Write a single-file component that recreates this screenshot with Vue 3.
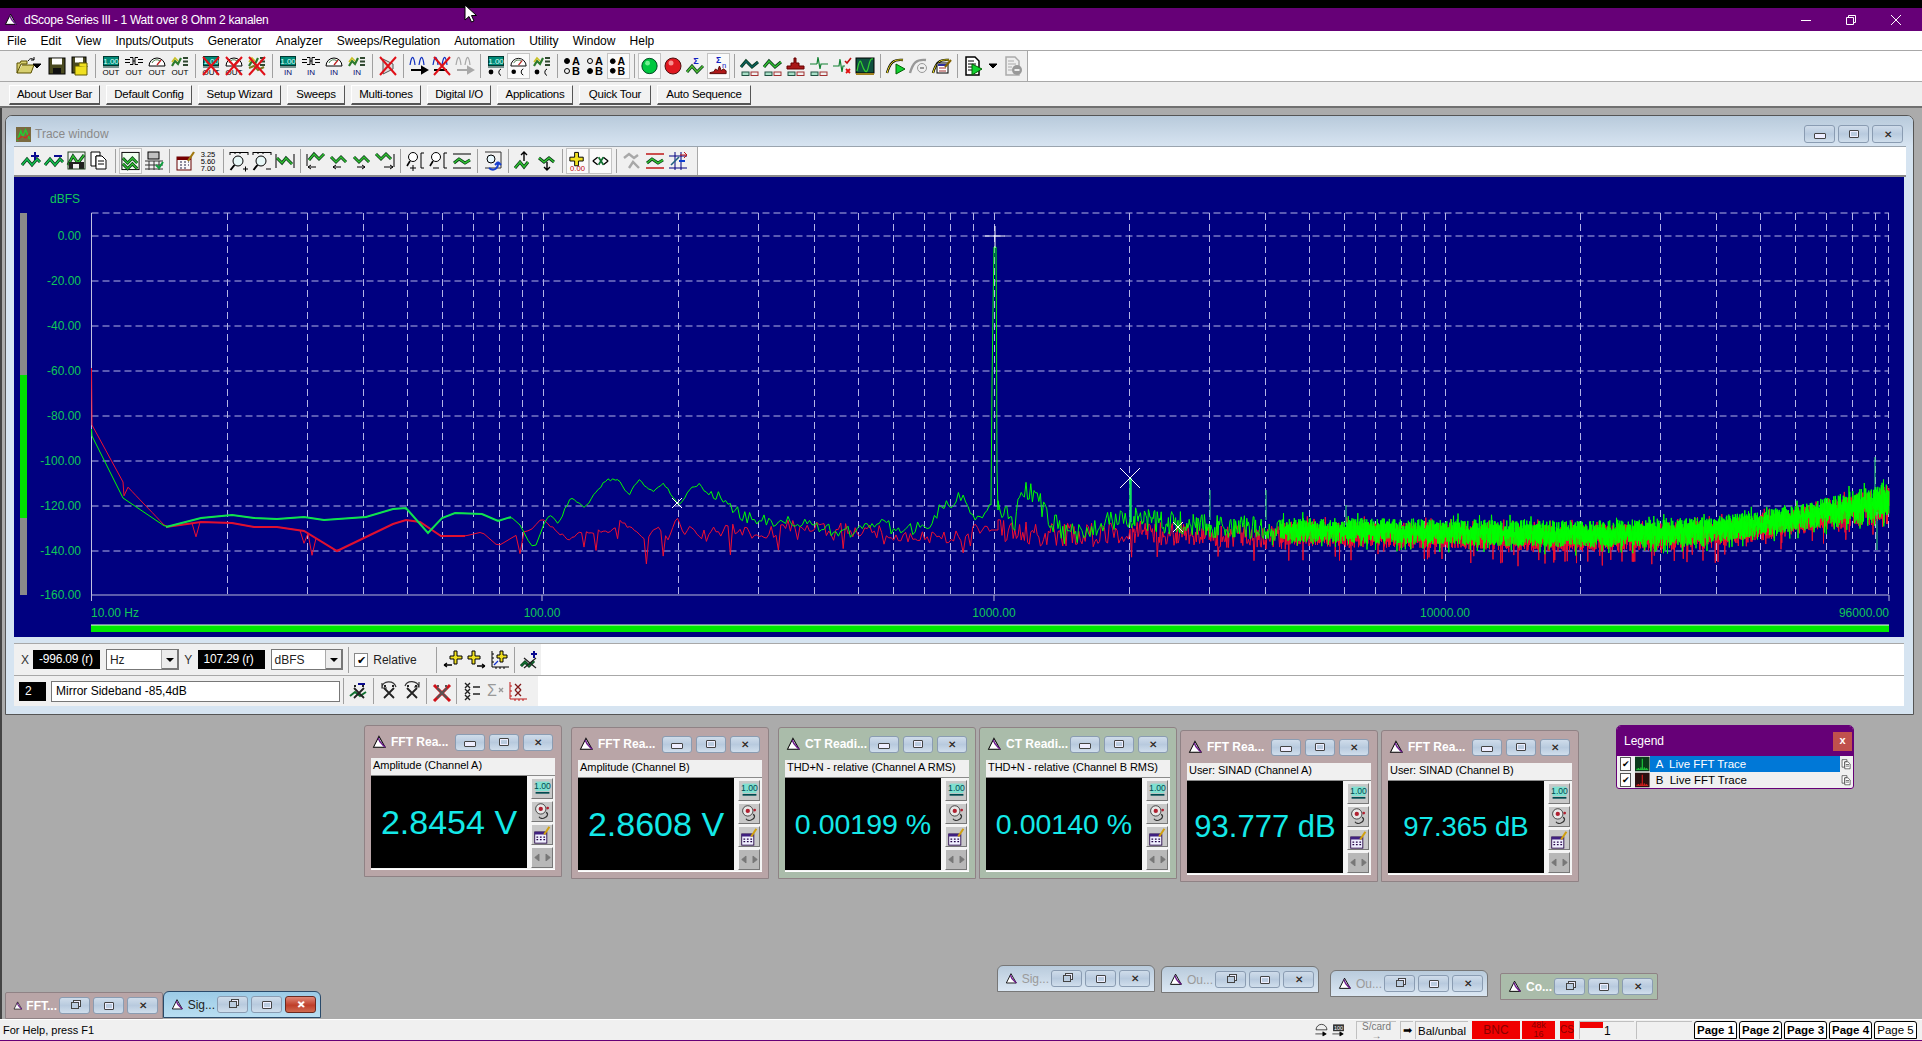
<template>
  <div class="app">
    <div class="topstrip"></div>
    <div class="titlebar">
      <Ico name="win" :size="16" class="title-ico" />
      <span class="title-text">dScope Series III - 1 Watt over 8 Ohm 2 kanalen</span>
      <div class="sys-btns">
        <svg width="12" height="12" viewBox="0 0 12 12"><path d="M1 6.5h10" stroke="#fff" fill="none" /></svg>
        <svg width="12" height="12" viewBox="0 0 12 12"><path d="M1.5 3.5h7v7h-7zM3.5 3.5v-2h7v7h-2" stroke="#fff" fill="none" /></svg>
        <svg width="12" height="12" viewBox="0 0 12 12"><path d="M1 1l10 10M11 1l-10 10" stroke="#fff" fill="none" /></svg>
      </div>
    </div>
    <div class="menubar">
      <span v-for="m in menus" :key="m">{{ m }}</span>
    </div>
    <div class="toolrow">
      <div class="tools main-tools">
        <template v-for="(t, i) in mainTools" :key="i">
          <i v-if="t === '|'" class="sep"></i>
          <span v-else :class="['tb', { on: t.endsWith('*'), narrow: t === 'drop', mid: t === 'dropWide' }]">
            <Ico :name="t.replace('*', '')" />
          </span>
        </template>
      </div>
    </div>
    <div class="userbar">
      <button v-for="b in userBtns" :key="b[0]" class="ubtn" :style="{ width: b[1] + 'px' }">{{ b[0] }}</button>
    </div>

    <div class="desktop">
      <div class="trace">
        <div class="trace-title">
          <Ico name="traceIco" :size="15" />
          <span>Trace window</span>
          <div class="caps">
            <span class="cap"><i class="g-min"></i></span>
            <span class="cap"><i class="g-max"></i></span>
            <span class="cap"><b>✕</b></span>
          </div>
        </div>
        <div class="toolrow2">
          <div class="tools trace-tools">
            <template v-for="(t, i) in traceTools" :key="i">
              <i v-if="t === '|'" class="sep"></i>
              <span v-else :class="['tb', { on: t.endsWith('*') }]">
                <Ico :name="t.replace('*', '')" />
              </span>
            </template>
          </div>
        </div>

        <svg class="plot" width="1890" height="460" viewBox="14 177 1890 460">
          <rect x="14" y="177" width="1890" height="460" fill="#000080" />
          <rect x="20" y="213" width="7" height="382" fill="#8a8a8a" />
          <rect x="20" y="375" width="7" height="143" fill="#00e000" />
          <text x="80" y="203" class="lbl" text-anchor="end">dBFS</text>
          <g v-for="g in yGrid" :key="g.y">
            <line x1="91.5" x2="1889" :y1="g.y" :y2="g.y" class="grid" />
            <text v-if="g.t" x="81" :y="g.y + 4" class="lbl" text-anchor="end">{{ g.t }}</text>
          </g>
          <text x="81" y="599" class="lbl" text-anchor="end">-160.00</text>
          <line v-for="x in xGrid" :key="x" :x1="x" :x2="x" y1="213" y2="595" class="grid" />
          <line x1="91.5" x2="91.5" y1="213" y2="595" stroke="#c0c0e0" />
          <path d="M91.5 595H1889M91.5 595v6M542 595v6M994 595v6M1445.5 595v6M1889 595v6" stroke="#b8b8d8" fill="none" />
          <polyline :points="traces.red" fill="none" stroke="#f01030" stroke-width="1" />
          <polyline :points="traces.redThick" fill="none" stroke="#e01030" stroke-width="2" />
          <polyline :points="traces.green" fill="none" stroke="#00ff00" stroke-width="1" />
          <polyline :points="traces.greenThick" fill="none" stroke="#10e050" stroke-width="2" />
          <path d="M1130.5 478V522" stroke="#10e060" stroke-width="2.5" fill="none" />
          <path d="M1210 490V520M1266 490V520M1346 505V525M1875 457V490M1877 512V550" stroke="#30e070" fill="none" />
          <path d="M985 236h20M995 226v22M1120 468l20 20M1140 468l-20 20M672 498l10 10M682 498l-10 10M1173 522l10 10M1183 522l-10 10" stroke="#fff" fill="none" />
          <text x="91" y="617" class="lbl">10.00 Hz</text>
          <text x="542" y="617" class="lbl" text-anchor="middle">100.00</text>
          <text x="994" y="617" class="lbl" text-anchor="middle">1000.00</text>
          <text x="1445" y="617" class="lbl" text-anchor="middle">10000.00</text>
          <text x="1889" y="617" class="lbl" text-anchor="end">96000.00</text>
          <rect x="91" y="625" width="1798" height="7" fill="#00e800" />
          <path d="M91 625h1798" stroke="#e8ffe8" fill="none" />
        </svg>

        <div class="ctl first">
          <div class="ctl-in row1">
            <span class="axis">X</span>
            <span class="readout">-996.09 (r)</span>
            <span class="combo"><span>Hz</span><i class="arrow"></i></span>
            <span class="axis y">Y</span>
            <span class="readout">107.29 (r)</span>
            <span class="combo"><span>dBFS</span><i class="arrow"></i></span>
            <i class="sep small"></i>
            <span class="check">✔</span>
            <span class="rel">Relative</span>
            <i class="sep small"></i>
            <span v-for="n in ['curL', 'curR', 'curAxis']" :key="n" class="tb"><Ico :name="n" /></span>
            <i class="sep tight"></i>
            <span class="tb"><Ico name="mkAdd" /></span>
          </div>
        </div>
        <div class="ctl">
          <div class="ctl-in row2">
            <span class="readout idx">2</span>
            <span class="note">Mirror Sideband -85,4dB</span>
            <i class="sep tight"></i>
            <span class="tb"><Ico name="mkDel" /></span>
            <i class="sep tight"></i>
            <span class="tb"><Ico name="mkUp" /></span>
            <span class="tb"><Ico name="mkDn" /></span>
            <i class="sep tight"></i>
            <span class="tb"><Ico name="mkX" /></span>
            <i class="sep tight"></i>
            <span class="tb"><Ico name="mkList" /></span>
            <span class="tb"><Ico name="mkSum" /></span>
            <span class="tb"><Ico name="mkRed" /></span>
          </div>
        </div>
      </div>

      <div
        v-for="w in readings"
        :key="w.value"
        :class="['reading', w.tone]"
        :style="{ left: w.x + 'px', top: w.y - 108 + 'px' }"
      >
        <div class="r-title">
          <Ico name="win" :size="17" />
          <span class="r-name">{{ w.title }}</span>
          <div class="caps">
            <span class="cap"><i class="g-min"></i></span>
            <span class="cap"><i class="g-max"></i></span>
            <span class="cap"><b>✕</b></span>
          </div>
        </div>
        <div class="r-label">{{ w.label }}</div>
        <div class="r-body">
          <div class="r-value" :style="{ fontSize: w.size + 'px' }">{{ w.value }}</div>
          <div class="r-side">
            <span v-for="n in ['rNum', 'rDial', 'rCal', 'rArrows']" :key="n" :class="['r-btn', { dim: n === 'rArrows' }]">
              <Ico :name="n" :size="19" />
            </span>
          </div>
        </div>
      </div>

      <div class="legend">
        <div class="lg-title">
          <span>Legend</span>
          <b>x</b>
        </div>
        <div v-for="l in legend" :key="l.t" class="lg-row">
          <span class="lg-check">✔</span>
          <Ico :name="l.ico" :size="16" />
          <span :class="['lg-name', { sel: l.sel }]">{{ l.t }}</span>
          <Ico name="copy" :size="13" class="lg-copy" />
        </div>
      </div>

      <div
        v-for="m in minis"
        :key="m.x"
        :class="['mini', m.tone, { active: m.active }]"
        :style="{ left: m.x + 'px', top: m.y - 108 + 'px' }"
      >
        <Ico name="win" :size="16" />
        <span class="m-name">{{ m.title }}</span>
        <div class="caps">
          <span class="cap"><i class="g-rest"></i></span>
          <span class="cap"><i class="g-max"></i></span>
          <span class="cap close"><b>✕</b></span>
        </div>
      </div>

      <svg class="cursor" width="14" height="20" viewBox="0 0 14 20">
        <path d="M1 1v15l4-3.500 2.500 5.500 2.500-1-2.500-5.500h5z" fill="#fff" stroke="#000" />
      </svg>
    </div>

    <div class="status">
      <span class="help">For Help, press F1</span>
      <div class="panels">
        <Ico name="stGauge" :size="15" />
        <Ico name="stNum" :size="15" />
        <span class="pn scard">S/card<br />→</span>
        <span class="pn arrow-pn">➡</span>
        <span class="pn bal">Bal/unbal</span>
        <span class="pn redp bnc">BNC</span>
        <span class="pn redp k48">48k<br />16</span>
        <span class="pn redp cs">CS</span>
        <span class="pn one"><i></i>1</span>
        <span class="pn blank"></span>
        <span v-for="p in pages" :key="p" :class="['page', { thin: p === 'Page 5' }]">{{ p }}</span>
      </div>
    </div>
  </div>
</template>

<script setup>
import { h } from 'vue';

// small shape helpers for the toolbar icons
const P = (d, s = '#000', f = 'none', w = 1) => ['path', { d, stroke: s, fill: f, 'stroke-width': w }];
const R = (x, y, wd, ht, f, s = 'none') => ['rect', { x, y, width: wd, height: ht, fill: f, stroke: s }];
const C = (cx, cy, r, f, s = 'none') => ['circle', { cx, cy, r, fill: f, stroke: s }];
const T = (x, y, str, size, f = '#000', bold = false) => [
  'text',
  { x, y, 'font-size': size, fill: f, 'text-anchor': 'middle', 'font-family': 'Liberation Sans', 'font-weight': bold ? 700 : 400 },
  str,
];

const num = [R(3.5, 1.5, 15, 9, '#008a78', '#003830'), T(11, 9, '1.00', 8, '#d8fff4'), P('M3 12h16', '#003830')];
const sw = [P('M2 4.500h5M2 7.500h5M15 4.500h5M15 7.500h5M7 2.500h3v7h-3M15 2.500h-3v7h3'), P('M10 6h2')];
const gauge = [P('M3 11a8 8 0 0 1 16 0z', '#000', '#fff'), P('M11 10l4-5', '#c02020', 'none', 1.3), P('M6 8a5 5 0 0 1 8-2', '#508050')];
const bars = [P('M3 11l3-5 3 3 3-6', '#2c7a2c', 'none', 2.2), P('M3 7l3-4 3 3', '#c8c020', 'none', 1.6), R(14, 2, 5, 2, '#304830'), R(14, 5.5, 5, 2, '#304830'), R(14, 9, 5, 2, '#304830')];
const redX = P('M3 2L19 20M19 2L3 20', '#e01018', 'none', 2);
const oc = [C(6, 17, 2.4, '#000'), P('M16 14a3.500 3.500 0 0 0 0 6.500')];
const zig = 'M2 15L7 9l5 6 5-6 3 3';
const wave = (d = zig, c = '#12c050') => [P(d, '#083818', 'none', 3), P(d, c, 'none', 1.5)];
const mini = (c) => [R(3, 17, 7, 3.5, '#a8e0c8', '#205040'), R(12, 17, 7, 3.5, '#f0f0f0', c)];
const ab = (a, b) => [C(5, 6, 2.5, a ? '#000' : 'none', '#000'), C(5, 16, 2.5, b ? '#000' : 'none', '#000'), T(14, 10, 'A', 11, '#000', true), T(14, 20, 'B', 11, '#000', true)];
const cross = (c = '#222') => P('M6 8l10 10M16 8l-10 10M6 6h2M14 6h2', c, 'none', 1.8);

const icons = {
  win: [P('M2 17L9 3l8 14z', '#000', '#fff', 1.3), P('M8 5c2 7 5 8 9 12', '#6a1a8a', 'none', 2)],
  open: [P('M2 18V8h3l1-2h6v3H6l-4 9h14l3-8H7', '#5a5000', '#d8d070'), P('M13 6c2-3 4-3 6-1M19 2v3h-3', '#000')],
  drop: [P('M0 9h8l-4 4z', '#000', '#000')],
  dropWide: [P('M7 9h8l-4 4z', '#000', '#000')],
  save: [R(3, 3, 16, 16, '#4a4a20', '#000'), R(6, 3.500, 10, 6, '#fff'), R(7, 13, 8, 6, '#111')],
  saveas: [R(3, 2, 14, 16, '#4a4a20', '#000'), R(6, 2.500, 8, 5, '#fff'), P('M6 20v-9h12v9z', '#605800', '#f0e020'), P('M10 11V8h8v4', '#605800', '#f0e020')],
  numOut: [...num, T(11, 20, 'OUT', 8)],
  swOut: [...sw, T(11, 20, 'OUT', 8)],
  gaugeOut: [...gauge, T(11, 20, 'OUT', 8)],
  barsOut: [...bars, T(11, 20, 'OUT', 8)],
  numOutX: [...num, T(11, 20, 'OUT', 8), redX],
  gaugeOutX: [...gauge, T(11, 20, 'OUT', 8), redX],
  barsX: [...bars, P('M3 13l5-2 4 4 6-3', '#7a7a20', 'none', 2), redX],
  numIn: [...num, T(11, 20, 'IN', 8, '#0a0a70')],
  swIn: [...sw, T(11, 20, 'IN', 8, '#0a0a70')],
  gaugeIn: [...gauge, T(11, 20, 'IN', 8, '#0a0a70')],
  barsIn: [...bars, T(11, 20, 'IN', 8, '#0a0a70')],
  redX: [P('M6 4l10 5v5l-10 5z', '#555', '#ddd'), redX],
  wavesArrow: [P('M2 10c2-12 4-8 5 0M11 10c2-12 4-8 5 0', '#1030c0', 'none', 1.2), P('M3 15h13M14 12l5 3-5 3z', '#000', '#000', 2)],
  wavesX: [P('M2 10c2-12 4-8 5 0M11 10c2-12 4-8 5 0', '#1030c0', 'none', 1.2), P('M3 15h13', '#000', 'none', 2), redX],
  wavesGray: [P('M2 10c2-12 4-8 5 0M11 10c2-12 4-8 5 0', '#a8a8a8', 'none', 1.2), P('M3 15h13M14 12l5 3-5 3z', '#a8a8a8', '#a8a8a8', 2)],
  numC: [...num, ...oc],
  gaugeC: [...gauge, ...oc],
  barsC: [...bars, ...oc],
  abA: ab(true, false),
  abB: ab(false, true),
  abAB: ab(true, true),
  green: [C(11, 11, 8, '#00c840', '#004020'), C(9, 8, 2.5, '#70f090')],
  red: [C(11, 11, 8, '#e01820', '#501010'), C(9, 8, 2.5, '#f89090')],
  sigmaWave: [T(11, 9, 'Σ', 9, '#1020c0', true), P('M2 17l5-6 5 6 6-6', '#0a4020', 'none', 3), P('M2 17l5-6 5 6 6-6', '#50c030', 'none', 1.4)],
  sigma: [T(11, 8, 'Σ', 9, '#1020c0', true), T(17, 13, 'n', 8, '#1020c0'), P('M2 19h17V16l-3-2-2 2-2-5-2 5-2-2-2 3-4 1z', '#5a0a0a', '#b01818')],
  waveDk: [...wave('M2 12l5-6 6 6 6-5', '#0a6060'), ...mini('#a03030')],
  waveGn: [...wave('M2 12l5-6 6 6 6-5', '#30c030'), ...mini('#a03030')],
  specRed: [P('M2 14v-3h4V8h3V3h2v5h3v3h5v3z', '#600', '#a81818'), ...mini('#a03030')],
  specGn: [P('M2 9h7M9 9l1-7 2 12 1-5h7', '#108030', 'none', 1.2), ...mini('#a03030')],
  specX: [P('M2 11h6l1-7 2 13 1-6h2', '#108030', 'none', 1.2), P('M14 6l2 2 4-5', '#c01010', 'none', 1.6), P('M15 14l4 4M19 14l-4 4', '#e01010', 'none', 1.8)],
  scope: [R(2, 3, 18, 15, '#105040', '#000'), P('M3 16c4-20 4-4 8 0s3-14 8-12', '#30d030', 'none', 1.2), R(2, 18, 18, 2, '#a08020')],
  curvePlay: [P('M2 18c3-10 6-14 16-13', '#000', 'none', 2.4), P('M2 18c3-10 6-14 16-13', '#f0e020', 'none', 1), P('M11 9l9 5-9 5z', '#006000', '#10d030')],
  curveGray: [P('M2 18c3-10 6-14 16-13', '#999', 'none', 2.4), C(14, 13, 4.5, 'none', '#999'), P('M12 13h4', '#999', 'none', 2)],
  script: [P('M2 18c3-10 6-14 16-13', '#000', 'none', 2.4), P('M2 18c3-10 6-14 16-13', '#f0e020', 'none', 1), R(6, 8, 11, 10, '#fff', '#000'), R(7, 9, 9, 2, '#3030a0'), P('M8 13h7M8 16h7', '#a03030'), P('M14 12l6-7', '#806000', 'none', 2)],
  docPlay: [P('M4 2h9l4 4v14H4z', '#000', '#fff', 1.5), P('M6 6h6M6 9h8M6 12h4M6 15h4', '#000'), P('M10 9l10 5-10 6z', '#006000', '#10d030')],
  docGray: [P('M4 2h9l4 4v14H4z', '#aaa', '#eee', 1.5), P('M6 6h6M6 9h8M6 12h4M6 15h4', '#aaa'), C(15, 15, 5, '#999'), P('M12.500 15h5', '#eee', 'none', 2)],

  wvAdd: [...wave(), P('M15 2v8M11 6h8', '#0a0a90', 'none', 2)],
  wvDel: [...wave(), P('M11 6h8', '#0a0a90', 'none', 2)],
  wvSave: [...wave('M2 15L7 6l5 7 6-8', '#30c030'), R(3, 12, 15, 7, '#202020'), R(7, 14, 6, 5, '#f0f0f0'), R(2, 2, 17, 17, 'none', '#204020')],
  copy: [P('M2 2h9v4h-4v10h-5z', '#000', '#fff'), P('M7 6h6l4 4v9h-10z', '#000', '#fff'), P('M9 11h6M9 14h6', '#000')],
  wvBox: [R(2, 2, 18, 18, '#f0fff0', '#000'), ...wave('M3 8l5 5 5-5 5 5', '#30c030'), ...wave('M3 14l5 5 5-5 5 5', '#30c030')],
  wvTable: [R(5, 2, 11, 7, '#c0c0c0', '#000'), P('M2 11h18M2 15h18M2 19h18M6 11v9M11 11v9M16 11v9', '#333'), P('M13 15l3 3 4-6', '#10a040', 'none', 2)],
  calPen: [R(3, 7, 14, 13, '#f8f8f8', '#600'), R(3, 7, 14, 3, '#700'), P('M6 12h2M10 12h2M14 12h1M6 15h2M10 15h2M14 15h1M6 18h2M10 18h2', '#224'), P('M14 11l6-9', '#a07810', 'none', 2.2)],
  numsList: [T(11, 7, '3.25', 7.5), T(11, 14, '5.60', 7.5), T(11, 21, '7.00', 7.5)],
  zoomIn: [P('M2 2.500h18M2 2v3M7 2v2M12 2v2M20 2v3', '#000'), C(10, 11, 5, '#e8f8f8', '#000'), P('M6.500 15l-4 5', '#000', 'none', 2), P('M15 19h5M17.500 16.500v5', '#000')],
  zoomOut: [P('M2 2.500h18M2 2v3M7 2v2M12 2v2M20 2v3', '#000'), C(10, 11, 5, '#e8f8f8', '#000'), P('M6.500 15l-4 5', '#000', 'none', 2), P('M15 19h5', '#000')],
  zoomFit: [P('M2 4v14M20 4v14', '#000'), ...wave('M3 8l5 5 4-5 6 6', '#30c030')],
  pkL: [...wave('M4 10l5-6 5 5 5-5', '#30c030'), P('M2 4v12M3 17h8M3 17l3-2M3 17l3 2', '#000')],
  pkLb: [...wave('M3 7l5 5 5-5 5 5', '#30c030'), P('M5 17h8M5 17l3-2M5 17l3 2', '#000')],
  pkR: [...wave('M3 7l5 5 5-5 5 5', '#30c030'), P('M6 17h8M14 17l-3-2M14 17l-3 2', '#000')],
  pkRb: [...wave('M2 4l5 5 5-5 5 5', '#30c030'), P('M20 4v13M10 17h9M19 17l-3-2M19 17l-3 2', '#000')],
  magL: [C(8, 7, 4.5, '#fff', '#000'), P('M5 11l-3 5', '#000', 'none', 1.6), P('M5 18h6M8 15v6M16 3h3M16 3v15h3', '#000')],
  magLm: [C(8, 7, 4.5, '#fff', '#000'), P('M5 11l-3 5', '#000', 'none', 1.6), P('M5 18h6M16 3h3M16 3v15h3', '#000')],
  wvLines: [P('M2 4h18M2 18h18', '#000', 'none', 1.2), ...wave('M3 13l5-4 6 4 5-3', '#30c030')],
  grUndo: [P('M3 2h16v16H3', '#333', 'none', 1), C(9, 9, 4, '#e8f8ff', '#000'), P('M7 18c5 4 10 0 9-6M16 12l-3 3M16 12l3 3', '#1840d0', 'none', 2)],
  upWave: [...wave('M2 18l5-6 4 5 4-5', '#30c030'), P('M11 11V2M8 5l3-3 3 3', '#000', 'none', 1.4)],
  dnWave: [...wave('M3 8l5 4 5-4 5 4', '#30c030'), P('M11 12v8M8 17l3 3 3-3', '#000', 'none', 1.4)],
  cursorPlus: [P('M8 2h4v5h5v4h-5v5H8v-5H3V7h5z', '#000', '#f0e020'), T(11, 21, '0.00', 8, '#c00000')],
  cursorX: [P('M3 11l5-4M3 11l5 4M19 11l-5-4M19 11l-5 4', '#000', 'none', 1.4), P('M9 7l5 8M14 7l-5 8', '#107030', 'none', 1.8)],
  grayPeak: [P('M3 8l5-4 5 4 4-3M8 18l4-6 6 6', '#a8a8a8', 'none', 2.4)],
  redLines: [P('M2 4h18M2 18h18', '#c01818', 'none', 1.4), ...wave('M3 13l5-4 6 4 5-3', '#30c030')],
  axisGrid: [P('M8 2v18M2 6h18M2 18h18M14 2v18', '#000080'), P('M4 15l8-8', '#206080', 'none', 1.6), P('M13 5h6M17 2l3 3-3 3', '#c01818'), P('M12 11h6', '#1040d0', 'none', 2)],

  curL: [P('M11 2h3v5h5v3h-5v5h-3v-5H7V7h4z', '#000', '#f0e020'), P('M1 16h8M1 16l3-2M1 16l3 2', '#000', 'none', 1.3)],
  curR: [P('M6 2h3v5h5v3H9v5H6v-5H2V7h4z', '#000', '#f0e020'), P('M11 17h8M19 17l-3-2M19 17l-3 2', '#000', 'none', 1.3)],
  curAxis: [P('M3 2v16h17M3 5h2M3 9h2M3 13h2M7 18v2M11 18v2M15 18v2', '#000'), P('M11 2h3v4h4v3h-4v4h-3V9H8V6h3z', '#000', '#f0e020'), P('M5 16l4-4', '#1030d0', 'none', 1.3)],
  mkAdd: [...wave('M2 17l4-4 4 4 5-5', '#107030'), P('M5 9l12 10M17 9L5 19', '#222', 'none', 1.3), P('M15 2v7M12 5h6', '#0a0a90', 'none', 2)],
  mkDel: [P('M2 16l5-4 5 4 6-4', '#107030', 'none', 2), cross(), P('M10 4h7', '#0a0a90', 'none', 2)],
  mkUp: [P('M4 8c0-8 12-8 14-1M4 3v5h5', '#333', 'none', 1.2), cross()],
  mkDn: [P('M4 6c2-6 12-6 14 1M18 2v5h-5', '#333', 'none', 1.2), cross()],
  mkX: [P('M3 5l16 16M19 5L3 21', '#d01018', 'none', 3), cross('#555')],
  mkList: [P('M4 3l5 5M9 3L4 8M4 9l5 5M9 9l-5 5M4 15l5 5M9 15l-5 5', '#222', 'none', 1.4), P('M12 7h7M12 14h7', '#222', 'none', 1.5)],
  mkSum: [T(8, 16, 'Σ', 16, '#999'), P('M15 8l4 4M19 8l-4 4', '#999', 'none', 1.4)],
  mkRed: [P('M3 2v17h17M3 6h2M3 11h2M3 16h2M8 19v2M12 19v2M16 19v2', '#c01818'), P('M8 4l6 6M14 4l-6 6M8 10l6 6M14 10l-6 6', '#801818', 'none', 1.3)],

  traceIco: [R(0, 0, 22, 22, '#7a6a40'), P('M2 20l5-14 3 8 4-10 6 14', '#20d030', 'none', 2), P('M2 18l7-4 5 2 6-6', '#e02020', 'none', 1.5)],
  rNum: [R(3, 3, 16, 11, '#80e0d0'), T(11, 12, '1.00', 10, '#004a50'), P('M3 16h16', '#004a50', 'none', 2)],
  rDial: [C(9, 8, 6, '#e8e8e8', '#333'), C(9, 8, 2.5, '#b02030'), P('M15 12c3 1 2 5-1 6-3 2-6 1-7-1', '#333', 'none', 1.4), C(17, 7, 1.6, '#b02030')],
  rCal: [R(2, 8, 14, 13, '#f0f0ff', '#204'), R(2, 8, 14, 3, '#402080'), P('M4 14h2M8 14h2M12 14h2M4 17h2M8 17h2M12 17h2', '#204', 'none', 1.4), P('M13 11l6-9', '#d0a010', 'none', 2.4)],
  rArrows: [P('M2 11l5-4v8zM20 11l-5-4v8z', '#777', '#777')],
  traceA: [R(0, 0, 22, 22, '#0a3a1a'), P('M2 19h18M5 19v-2M9 19v-3M11 19V3M14 19v-3M17 19v-2', '#20e040', 'none', 1.5)],
  traceB: [R(0, 0, 22, 22, '#2a1010'), P('M2 19h18M5 19v-2M9 19v-3M11 19V3M14 19v-3M17 19v-2', '#f02020', 'none', 1.5)],
  stGauge: [P('M3 10a8 8 0 0 1 16 0z', '#000', '#eee'), P('M2 16h15M13 13l5 3-5 3z', '#000', '#000')],
  stNum: [R(3, 2, 16, 10, '#333'), T(11, 10, '100', 8, '#fff'), P('M2 16h15M13 13l5 3-5 3z', '#000', '#000')],
};

const Ico = (props) =>
  h(
    'svg',
    { width: props.size || 22, height: props.size || 22, viewBox: '0 0 22 22' },
    (icons[props.name] || []).map(([tag, attrs, txt]) => h(tag, attrs, txt))
  );
Ico.props = ['name', 'size'];

const menus = ['File', 'Edit', 'View', 'Inputs/Outputs', 'Generator', 'Analyzer', 'Sweeps/Regulation', 'Automation', 'Utility', 'Window', 'Help'];

const mainTools = [
  'open', 'drop', 'save', 'saveas', '|',
  'numOut', 'swOut', 'gaugeOut', 'barsOut', '|',
  'numOutX', 'gaugeOutX', 'barsX', '|',
  'numIn', 'swIn', 'gaugeIn', 'barsIn', '|',
  'redX', '|',
  'wavesArrow', 'wavesX', 'wavesGray', '|',
  'numC', 'gaugeC*', 'barsC', '|',
  'abA', 'abB', 'abAB*', '|',
  'green*', 'red', 'sigmaWave', 'sigma*', '|',
  'waveDk', 'waveGn', 'specRed', 'specGn', 'specX', 'scope', '|',
  'curvePlay', 'curveGray', 'script', '|',
  'docPlay', 'dropWide', 'docGray',
];

const traceTools = [
  'wvAdd', 'wvDel', 'wvSave', 'copy', '|',
  'wvBox*', 'wvTable', '|',
  'calPen', 'numsList', '|',
  'zoomIn', 'zoomOut', 'zoomFit', '|',
  'pkL', 'pkLb', 'pkR', 'pkRb', '|',
  'magL', 'magLm', 'wvLines', '|',
  'grUndo', '|',
  'upWave', 'dnWave', '|',
  'cursorPlus*', 'cursorX*', '|',
  'grayPeak', 'redLines', 'axisGrid',
];

const userBtns = [
  ['About User Bar', 91], ['Default Config', 86], ['Setup Wizard', 83], ['Sweeps', 58], ['Multi-tones', 70],
  ['Digital I/O', 64], ['Applications', 76], ['Quick Tour', 72], ['Auto Sequence', 94],
];

const readings = [
  { x: 364, y: 725, tone: 'rose', title: 'FFT Rea...', label: 'Amplitude (Channel A)', value: '2.8454 V', size: 34 },
  { x: 571, y: 727, tone: 'rose', title: 'FFT Rea...', label: 'Amplitude (Channel B)', value: '2.8608 V', size: 34 },
  { x: 778, y: 727, tone: 'sage', title: 'CT Readi...', label: 'THD+N - relative (Channel A RMS)', value: '0.00199 %', size: 28.5 },
  { x: 979, y: 727, tone: 'sage', title: 'CT Readi...', label: 'THD+N - relative (Channel B RMS)', value: '0.00140 %', size: 28.5 },
  { x: 1180, y: 730, tone: 'rose', title: 'FFT Rea...', label: 'User: SINAD (Channel A)', value: '93.777 dB', size: 31 },
  { x: 1381, y: 730, tone: 'rose', title: 'FFT Rea...', label: 'User: SINAD (Channel B)', value: '97.365 dB', size: 27.5 },
];

const legend = [
  { t: 'A  Live FFT Trace', ico: 'traceA', sel: true },
  { t: 'B  Live FFT Trace', ico: 'traceB', sel: false },
];

const minis = [
  { x: 5, y: 992, tone: 'rose', title: 'FFT...' },
  { x: 163, y: 991, tone: 'blue', title: 'Sig...', active: true },
  { x: 997, y: 965, tone: 'blue', title: 'Sig...' },
  { x: 1161, y: 966, tone: 'blue', title: 'Ou...' },
  { x: 1330, y: 970, tone: 'blue', title: 'Ou...' },
  { x: 1500, y: 973, tone: 'sage', title: 'Co...' },
];

const pages = ['Page 1', 'Page 2', 'Page 3', 'Page 4', 'Page 5'];

// plot axes: 45px per 20 dB, 451px per decade
const yGrid = [
  { y: 213 }, { y: 236, t: '0.00' }, { y: 281, t: '-20.00' }, { y: 326, t: '-40.00' }, { y: 371, t: '-60.00' },
  { y: 416, t: '-80.00' }, { y: 461, t: '-100.00' }, { y: 506, t: '-120.00' }, { y: 551, t: '-140.00' },
];
const xGrid = [];
for (let dec = 0; dec < 4; dec++) {
  for (let k = 1; k < 10; k++) {
    const x = 91.5 + 451 * (dec + Math.log10(k));
    if (x > 92 && x < 1889) xGrid.push(Math.round(x) + 0.5);
  }
}
xGrid.push(1888.5);

const seeded = (seed) => () => {
  seed = (seed + 0x6d2b79f5) | 0;
  let t = Math.imul(seed ^ (seed >>> 15), 1 | seed);
  t = (t + Math.imul(t ^ (t >>> 7), 61 | t)) ^ t;
  return ((t ^ (t >>> 14)) >>> 0) / 4294967296;
};

const lerp = (pts, x) => {
  for (let i = 1; i < pts.length; i++) {
    if (x <= pts[i][0]) {
      const [x0, y0] = pts[i - 1];
      const [x1, y1] = pts[i];
      return y0 + ((y1 - y0) * (x - x0)) / (x1 - x0);
    }
  }
  return pts[pts.length - 1][1];
};

const greenLow = [
  [91.5, 429], [92, 436], [123, 498], [166, 527], [201, 518], [232, 515], [254, 518], [277, 519], [304, 517], [324, 520], [366, 517],
  [393, 509], [406, 508], [428, 533], [442, 518], [455, 513], [482, 514], [498, 521], [511, 517], [520, 525], [531, 546], [536, 545],
  [547, 516], [553, 517], [558, 524], [571, 497], [585, 507], [607, 479], [618, 480], [629, 496], [639, 478], [647, 488], [654, 492],
  [663, 483], [679, 505], [692, 487], [700, 484], [712, 495], [725, 497], [740, 515], [760, 520], [797, 522], [830, 530], [858, 533],
  [880, 525], [905, 530], [931, 525], [943, 503], [955, 500], [965, 497], [972, 515], [985, 520], [991, 508],
];
const greenMid = [
  [998, 510], [1005, 512], [1015, 525], [1020, 495], [1027, 490], [1040, 503], [1050, 520], [1065, 533], [1085, 525], [1100, 530], [1112, 520], [1128, 517], [1200, 526], [1280, 529],
];
const redLow = [
  [91.5, 368], [92, 425], [123, 482], [166, 527], [201, 522], [232, 523], [254, 527], [277, 527], [304, 531], [337, 551], [366, 537],
  [393, 524], [406, 520], [420, 522], [441, 536], [465, 536], [482, 532], [498, 546], [520, 533], [531, 530], [542, 518], [556, 531],
  [570, 540], [579, 531], [590, 534], [598, 531], [610, 533], [620, 521], [635, 531], [645, 541], [657, 527], [668, 539], [677, 516],
  [684, 536], [690, 525], [700, 537], [725, 530], [760, 535], [790, 525], [830, 530], [860, 530], [900, 535], [950, 538], [980, 527], [991, 530],
];
const redMid = [[998, 530], [1050, 535], [1100, 535], [1130, 532], [1200, 535], [1280, 538]];
const bandTop = [[1280, 517], [1300, 518], [1445, 519], [1580, 521], [1700, 517], [1760, 511], [1800, 504], [1850, 491], [1889, 483]];
const bandBot = [[1280, 541], [1300, 542], [1445, 545], [1580, 548], [1700, 546], [1760, 537], [1800, 530], [1850, 524], [1889, 520]];

const stepFor = (x) => (x < 1000 ? 2.4 : x < 1130 ? 1.6 : x < 1280 ? 0.8 : 0.25);

const buildTrace = (low, mid, seed, shift, peak) => {
  const rnd = seeded(seed);
  const out = [];
  const push = (x, y) => out.push(x.toFixed(1) + ',' + y.toFixed(1));
  low.slice(0, 3).forEach(([x, y]) => push(x, y));
  // smooth below 100 Hz, then progressively noisier bins
  for (let x = 124; x < 991; x += x < 545 ? 4 : stepFor(x)) {
    const amp = x < 545 ? 0 : x < 700 ? 1.5 : 7;
    const dip = shift && rnd() < 0.07 ? 12 + rnd() * 12 : 0;
    push(x, lerp(low, x) + (rnd() - 0.5) * 2 * amp + dip);
  }
  peak.forEach(([x, y]) => push(x, y));
  for (let x = 998; x < 1280; x += stepFor(x)) {
    const dip = rnd() < 0.05 ? 6 + rnd() * 12 : 0;
    push(x, lerp(mid, x) + (rnd() - 0.5) * 24 + dip);
  }
  // above 2 kHz the bins are denser than the pixels: alternate top and bottom so the band fills in
  let flip = false;
  for (let x = 1280; x <= 1889; x += stepFor(x)) {
    const top = lerp(bandTop, x) + shift;
    const bot = lerp(bandBot, x) + shift;
    const mid2 = (top + bot) / 2;
    let y = flip ? top + rnd() * (mid2 - top) : mid2 + rnd() * (bot - mid2);
    flip = !flip;
    const r = rnd();
    if (r < 0.012) y = top - rnd() * 6;
    else if (r < 0.04) y = bot + rnd() * (shift ? 16 : 8);
    push(x, y);
  }
  return out.join(' ');
};

const thick = (pts) => pts.map((p) => p.join(',')).join(' ');

const traces = {
  red: buildTrace(redLow, redMid, 7, 4, [[991, 530], [998, 530]]),
  redThick: thick(redLow.slice(3, 16)),
  green: buildTrace(greenLow, greenMid, 21, 0, [[991, 505], [992, 385], [993, 310], [994, 247], [996, 247], [996.5, 330], [997, 470], [998, 510]]),
  greenThick: thick(greenLow.slice(3, 19)),
};
</script>

<style scoped>
.app {
  width: 1922px;
  height: 1041px;
  overflow: hidden;
  background: #ababab;
  font-family: 'Liberation Sans', Arial, sans-serif;
  font-size: 12px;
  color: #000;
}
.topstrip { height: 8px; background: #000; }
.titlebar {
  height: 23px;
  background: #660077;
  color: #fff;
  display: flex;
  align-items: center;
  padding-left: 4px;
}
.title-ico { margin-right: 4px; }
.title-text { letter-spacing: -0.28px; }
.sys-btns {
  margin-left: auto;
  display: flex;
  gap: 33px;
  padding-right: 20px;
}
.menubar {
  height: 20px;
  background: #fff;
  display: flex;
  align-items: center;
  gap: 14.2px;
  padding-left: 7px;
  box-sizing: border-box;
  border-bottom: 1px solid #a8a8a8;
}
.toolrow {
  height: 30px;
  background: #fff;
  border-bottom: 1px solid #a8a8a8;
}
.tools {
  height: 100%;
  background: #f0f0f0;
  display: flex;
  align-items: center;
  box-sizing: border-box;
}
.main-tools { width: 1028px; padding-left: 14px; border-right: 1px solid #a8a8a8; }
.tb {
  width: 23px;
  height: 26px;
  flex: none;
  display: flex;
  align-items: center;
  justify-content: center;
  box-sizing: border-box;
}
.tb.narrow { width: 8px; }
.tb.narrow svg { flex: none; margin-left: 6px; }
.tb.mid { width: 17px; }
.tb.mid svg { flex: none; }
.tb.on { background: #fafafa; border: 1px solid #c4c4c4; }
.sep {
  width: 1px;
  height: 24px;
  background: #a0a0a0;
  margin: 0 3.5px;
  flex: none;
}
.sep.small { height: 26px; margin: 0 5px; }
.sep.tight { height: 26px; margin: 0 3px; }
.userbar {
  height: 26px;
  background: #efefef;
  display: flex;
  align-items: center;
  gap: 6px;
  padding-left: 9px;
  padding-top: 1px;
  box-sizing: border-box;
  border-bottom: 2px solid #707070;
}
.ubtn {
  height: 20px;
  padding: 0;
  background: #f2f2f2;
  border: 1px solid #fff;
  border-right-color: #555;
  border-bottom: 2px solid #555;
  font: inherit;
  font-size: 11.5px;
  letter-spacing: -0.25px;
  color: #000;
}
.desktop {
  position: relative;
  height: 911px;
  background: #ababab;
  box-shadow: inset 2px 0 0 #444;
}
.trace {
  position: absolute;
  left: 5px;
  top: 7px;
  width: 1909px;
  height: 600px;
  box-sizing: border-box;
  background: #d6e4f1;
  border: 1px solid #555;
  border-radius: 7px 7px 0 0;
  padding: 0 8px;
}
.trace-title {
  height: 30px;
  margin: 0 -8px;
  padding: 6px 10px 0 10px;
  box-sizing: border-box;
  display: flex;
  align-items: center;
  gap: 4px;
  color: #8a8a8a;
  background: linear-gradient(#b8cadb, #d7e4f1);
  border-radius: 6px 6px 0 0;
}
.caps {
  margin-left: auto;
  display: flex;
  gap: 3px;
}
.cap {
  width: 31px;
  height: 18px;
  box-sizing: border-box;
  border: 1px solid #8a9cb2;
  border-radius: 3px;
  background: linear-gradient(#cfdcea, #b8cade 50%, #d0deec);
  display: flex;
  align-items: center;
  justify-content: center;
  font-size: 10px;
  color: #444;
}
.cap b { color: #333; font-weight: 700; text-shadow: 0 0 1px #fff; }
.g-min { width: 10px; height: 4px; border: 1px solid #444; background: #eef; margin-top: 4px; border-radius: 1px; }
.g-max { width: 8px; height: 6px; border: 1px solid #444; box-shadow: inset 0 0 0 1px #eef; border-radius: 1px; }
.g-rest { width: 6px; height: 5px; border: 1px solid #444; box-shadow: 2px -2px 0 -1px #eef, 2px -2px 0 0 #444; }
.toolrow2 {
  height: 31px;
  width: 1892px;
  background: #fff;
  border-top: 1px solid #9aa4ae;
  box-sizing: border-box;
  border-bottom: 2px solid #8a8a8a;
}
.trace-tools { width: 684px; padding-left: 5px; border-right: 1px solid #a8a8a8; }
.plot { display: block; }
.lbl {
  fill: #10c858;
  font-family: 'Liberation Sans', Arial, sans-serif;
  font-size: 12px;
}
.grid {
  stroke: #b4b4e6;
  stroke-width: 1;
  stroke-dasharray: 7 4;
  fill: none;
}
.ctl {
  width: 1890px;
  height: 32px;
  background: #fff;
  border-top: 1px solid #a8a8a8;
  box-sizing: border-box;
}
.ctl.first { margin-top: 6px; }
.ctl:last-child { height: 31px; }
.ctl-in {
  height: 100%;
  display: flex;
  align-items: center;
  background: #f0f0f0;
  box-sizing: border-box;
}
.row1 { width: 527px; padding-left: 7px; }
.row2 { width: 524px; padding-left: 5px; }
.axis { width: 12px; color: #333; }
.axis.y { width: 19px; text-align: center; }
.readout {
  width: 67px;
  height: 19px;
  line-height: 19px;
  background: #000;
  color: #fff;
  padding-left: 6px;
  box-sizing: border-box;
  flex: none;
  letter-spacing: -0.2px;
}
.readout.idx { width: 27px; margin-right: 5px; }
.combo {
  width: 73px;
  height: 21px;
  margin-left: 6px;
  background: #fff;
  border: 1px solid #777;
  box-sizing: border-box;
  display: flex;
  align-items: center;
  padding-left: 3px;
  color: #222;
}
.arrow {
  margin-left: auto;
  width: 16px;
  height: 19px;
  background: #ececec;
  border-left: 1px solid #aaa;
  box-shadow: inset -1px -1px 0 #777;
  position: relative;
}
.arrow::after {
  content: '';
  position: absolute;
  left: 4px;
  top: 8px;
  border: 4px solid transparent;
  border-top: 4px solid #000;
  border-bottom: none;
}
.check {
  width: 14px;
  height: 14px;
  background: #fff;
  border: 1px solid #888;
  box-sizing: border-box;
  font-size: 11px;
  line-height: 12px;
  text-align: center;
}
.rel { margin-left: 5px; width: 58px; color: #222; }
.note {
  width: 289px;
  height: 21px;
  line-height: 19px;
  background: #fff;
  border: 1px solid #777;
  box-sizing: border-box;
  padding-left: 4px;
  flex: none;
}
.reading {
  position: absolute;
  width: 198px;
  height: 152px;
  box-sizing: border-box;
  border: 1px solid #8f8285;
  border-radius: 3px 3px 0 0;
  padding: 0 6px;
}
.rose { background: #b9a5a7; }
.sage { background: #aabcaa; }
.blue { background: linear-gradient(#b9cbdc, #dbe7f3); }
.r-title {
  height: 32px;
  display: flex;
  align-items: center;
  gap: 2px;
  margin-left: 1px;
  padding-right: 2px;
}
.r-name {
  color: #fff;
  font-weight: 700;
  font-size: 12px;
  white-space: nowrap;
}
.reading .caps { gap: 4px; }
.reading .cap { width: 30px; height: 17px; }
.r-label {
  height: 17px;
  line-height: 14px;
  font-size: 11px;
  letter-spacing: -0.05px;
  background: #f0f0f0;
  border-bottom: 1px solid #8a8a8a;
  padding-left: 2px;
  white-space: nowrap;
  overflow: hidden;
}
.r-body {
  display: flex;
  height: 93px;
  background: #f4f4f4;
  border-bottom: 1px solid #fff;
}
.r-value {
  width: 156px;
  height: 92px;
  background: #000;
  color: #14e8e8;
  display: flex;
  align-items: center;
  justify-content: center;
  white-space: nowrap;
}
.r-side {
  flex: 1;
  padding: 2px 2px 0 4px;
  display: flex;
  flex-direction: column;
  gap: 2px;
}
.r-btn {
  height: 19px;
  background: #c8c8c8;
  border: 1px solid #f4f4f4;
  border-right-color: #777;
  border-bottom-color: #777;
  box-sizing: content-box;
  display: flex;
  align-items: center;
  justify-content: center;
}
.r-btn.dim { background: #b8b8b8; }
.legend {
  position: absolute;
  left: 1616px;
  top: 617px;
  width: 238px;
  height: 64px;
  box-sizing: border-box;
  background: #f0f0f0;
  border: 1px solid #660077;
  border-radius: 5px 5px 3px 3px;
  overflow: hidden;
}
.lg-title {
  height: 30px;
  background: #660077;
  color: #fff;
  display: flex;
  align-items: center;
  padding-left: 7px;
}
.lg-title b {
  margin-left: auto;
  width: 19px;
  height: 19px;
  line-height: 17px;
  text-align: center;
  background: #c0504d;
  font-size: 11px;
  margin-right: 1px;
}
.lg-row {
  height: 16px;
  display: flex;
  align-items: center;
  padding-left: 3px;
  font-size: 11.5px;
}
.lg-check {
  width: 10px;
  height: 12px;
  border: 1px solid #555;
  background: #fff;
  font-size: 9px;
  line-height: 12px;
  margin-right: 4px;
  text-align: center;
  box-sizing: content-box;
}
.lg-name {
  width: 203px;
  height: 16px;
  line-height: 16px;
  padding-left: 6px;
  white-space: pre;
}
.lg-name.sel { background: #0078d7; color: #fff; }
.lg-copy { margin-left: 1px; }
.mini {
  position: absolute;
  width: 158px;
  height: 27px;
  box-sizing: border-box;
  display: flex;
  align-items: center;
  padding: 0 4px 0 7px;
  gap: 2px;
  border: 1px solid #777;
  border-radius: 6px 6px 0 0;
}
.mini.rose, .mini.sage { border-color: #8f8285; border-radius: 2px 2px 0 0; }
.mini.active { background: linear-gradient(#9ccbe6, #b9def2); border-color: #2a4a6a; }
.m-name { color: #9a9a9a; white-space: nowrap; }
.mini.rose .m-name, .mini.sage .m-name { color: #fff; font-weight: 700; }
.mini.active .m-name { color: #222; }
.mini .cap { width: 31px; height: 17px; }
.mini.active .close {
  background: linear-gradient(#e08878, #bf3f2a 55%, #d06a50);
  border-color: #6a2a20;
}
.mini.active .close b { color: #fff; }
.cursor {
  position: absolute;
  left: 464px;
  top: -104px;
}
.status {
  height: 22px;
  box-sizing: border-box;
  background: #f0f0f0;
  border-top: 1px solid #fff;
  border-bottom: 1px solid #660077;
  display: flex;
  align-items: center;
  padding-left: 3px;
}
.help { font-size: 11px; }
.panels {
  margin-left: auto;
  padding-right: 5px;
  display: flex;
  align-items: center;
  height: 100%;
  gap: 2px;
}
.panels > svg { flex: none; }
.pn {
  height: 18px;
  box-sizing: border-box;
  border-top: 1px solid #c0c0c0;
  border-left: 1px solid #c0c0c0;
  flex: none;
  text-align: center;
  line-height: 18px;
  white-space: nowrap;
}
.scard { width: 40px; margin-left: 8px; font-size: 10px; line-height: 9px; color: #777; }
.arrow-pn { width: 13px; font-size: 11px; margin-left: 2px; line-height: 16px; }
.bal { width: 53px; font-size: 11.5px; }
.redp { background: #f00000; color: #8a0000; border: none; }
.bnc { width: 48px; margin-left: 2px; }
.k48 { width: 33px; font-size: 9px; line-height: 9px; }
.cs { width: 14px; margin-left: 3px; font-size: 10px; }
.one { width: 55px; margin-left: 3px; text-align: left; position: relative; padding-left: 24px; }
.one i {
  position: absolute;
  left: 0;
  top: 0;
  width: 23px;
  height: 6px;
  background: #f00000;
}
.blank { width: 56px; }
.page {
  height: 18px;
  line-height: 16px;
  box-sizing: border-box;
  border: 1px solid #000;
  border-radius: 3px 3px 0 0;
  padding: 0 2px;
  width: 43px;
  text-align: center;
  font-weight: 700;
  font-size: 11.5px;
  white-space: nowrap;
  overflow: hidden;
  background: #fff;
}
.page.thin { font-weight: 400; }
</style>
